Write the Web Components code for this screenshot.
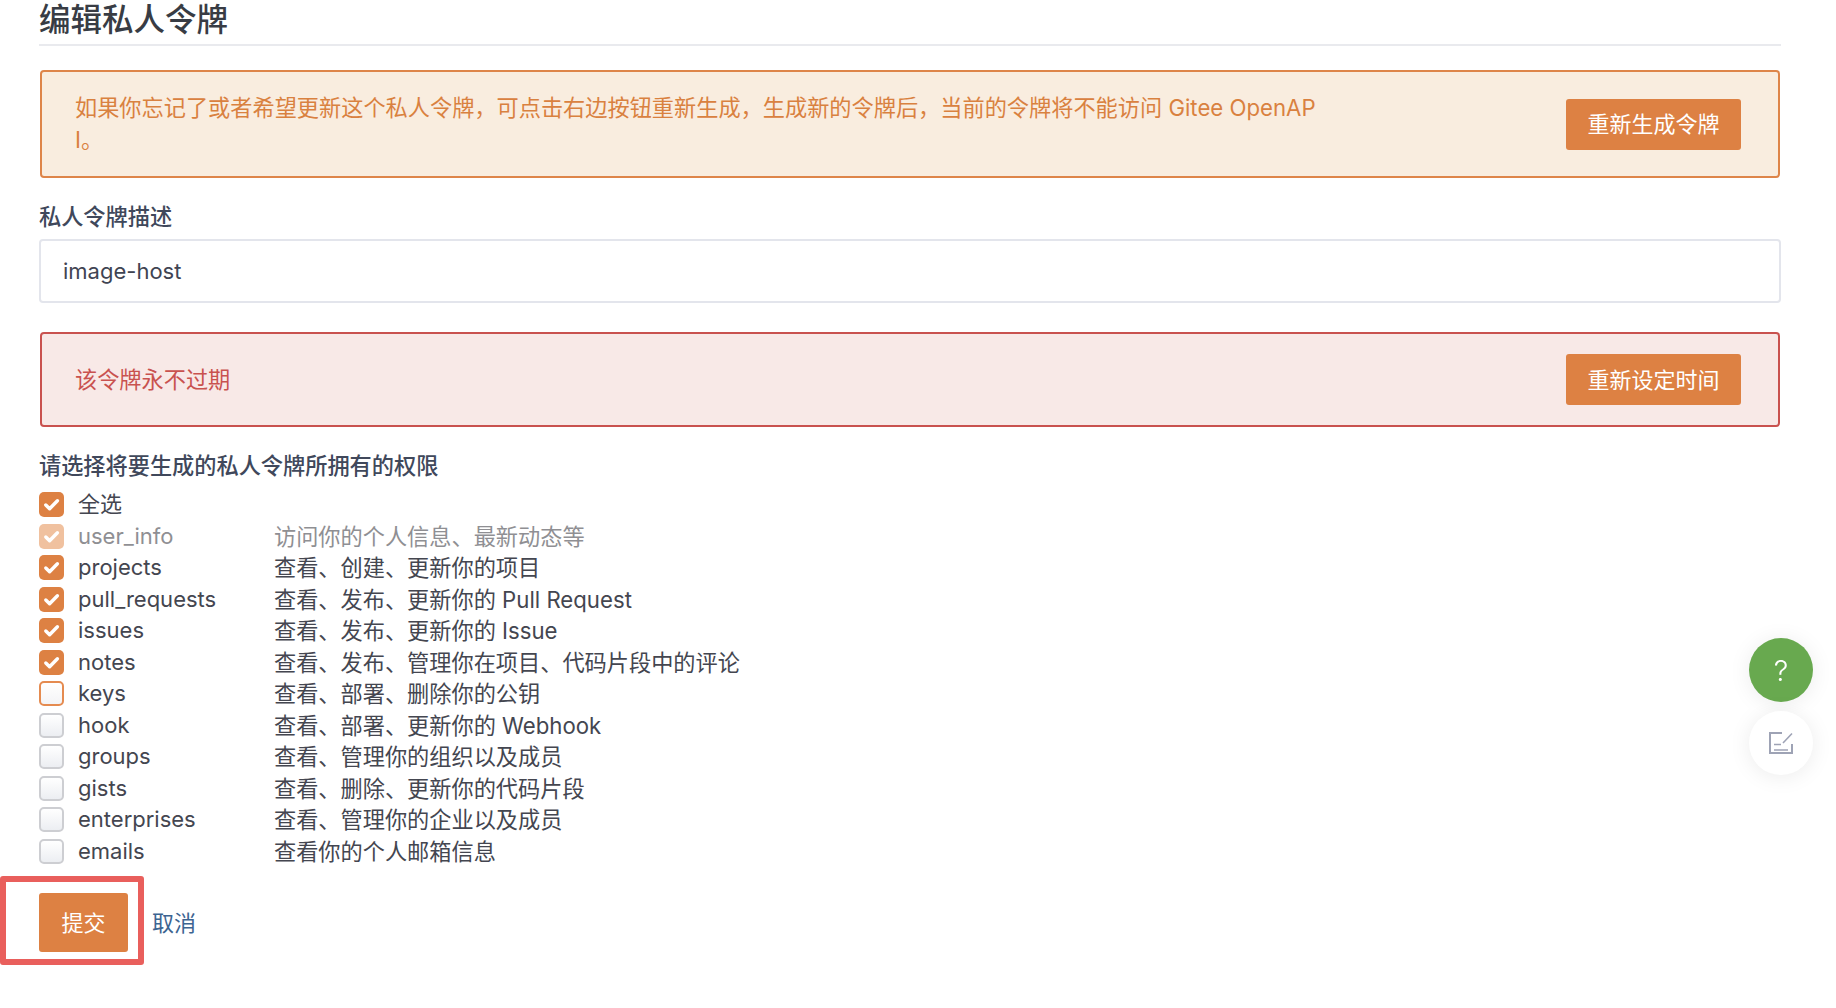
<!DOCTYPE html>
<html lang="zh-CN">
<head>
<meta charset="utf-8">
<title>编辑私人令牌</title>
<style>
  html, body { margin: 0; background: #fff; }
  body {
    font-family: Inter, "Noto Sans CJK SC", sans-serif;
    font-size: 22.2px;
    color: #40485b;
  }
</style>
</head>
<body>
<token-page>
  <page-title>编辑私人令牌</page-title>

  <token-alert tone="warning">
    如果你忘记了或者希望更新这个私人令牌，可点击右边按钮重新生成，生成新的令牌后，当前的令牌将不能访问 Gitee OpenAPI。
    <action-button slot="action">重新生成令牌</action-button>
  </token-alert>

  <field-label>私人令牌描述</field-label>
  <text-field>image-host</text-field>

  <token-alert tone="danger">
    该令牌永不过期
    <action-button slot="action">重新设定时间</action-button>
  </token-alert>

  <field-label>请选择将要生成的私人令牌所拥有的权限</field-label>
  <scope-list>
    <scope-row name="全选" checked></scope-row>
    <scope-row name="user_info" checked disabled>访问你的个人信息、最新动态等</scope-row>
    <scope-row name="projects" checked>查看、创建、更新你的项目</scope-row>
    <scope-row name="pull_requests" checked>查看、发布、更新你的 Pull Request</scope-row>
    <scope-row name="issues" checked>查看、发布、更新你的 Issue</scope-row>
    <scope-row name="notes" checked>查看、发布、管理你在项目、代码片段中的评论</scope-row>
    <scope-row name="keys" focused>查看、部署、删除你的公钥</scope-row>
    <scope-row name="hook">查看、部署、更新你的 Webhook</scope-row>
    <scope-row name="groups">查看、管理你的组织以及成员</scope-row>
    <scope-row name="gists">查看、删除、更新你的代码片段</scope-row>
    <scope-row name="enterprises">查看、管理你的企业以及成员</scope-row>
    <scope-row name="emails">查看你的个人邮箱信息</scope-row>
  </scope-list>

  <form-actions>
    <action-button slot="submit" wide>提交</action-button>
    取消
  </form-actions>
</token-page>

<float-tools></float-tools>

<script>
class TokenPage extends HTMLElement {
    constructor() {
        super();
        this.attachShadow({ mode: 'open' });
        this.shadowRoot.innerHTML = `
            <style>
                :host {
                    display: block;
                    box-sizing: border-box;
                    min-height: 100vh;
                    padding: 0 55px 0 39px;
                }
            </style>
            <slot></slot>
        `;
    }
}

class PageTitle extends HTMLElement {
    constructor() {
        super();
        this.attachShadow({ mode: 'open' });
        this.shadowRoot.innerHTML = `
            <style>
                :host {
                    display: block;
                    height: 42px;
                    padding: 2px 0 0 0;
                    border-bottom: 2px solid #e9eaee;
                    font-size: 31.5px;
                    font-weight: 500;
                    line-height: 36px;
                    color: #383c44;
                }
            </style>
            <slot></slot>
        `;
    }
}

class TokenAlert extends HTMLElement {
    constructor() {
        super();
        this.attachShadow({ mode: 'open' });
        this.shadowRoot.innerHTML = `
            <style>
                :host {
                    display: flex;
                    align-items: center;
                    justify-content: space-between;
                    box-sizing: border-box;
                    margin: 24px 1px 0;
                    padding: 20px 37px 20px 33px;
                    border: 2px solid;
                    border-radius: 4px;
                    line-height: 32px;
                }
                :host([tone="warning"]) { background: #f9eddf; border-color: #de8549; color: #d9813f; }
                :host([tone="danger"]) { min-height: 95px; margin-top: 29px; background: #f8e9e7; border-color: #c9524f; color: #c9524f; }
                .text { width: 1245px; word-break: break-all; }
            </style>
            <div class="text"><slot></slot></div>
            <slot name="action"></slot>
        `;
    }
}

class ActionButton extends HTMLElement {
    constructor() {
        super();
        this.attachShadow({ mode: 'open' });
        this.shadowRoot.innerHTML = `
            <style>
                :host {
                    display: inline-flex;
                    align-items: center;
                    justify-content: center;
                    box-sizing: border-box;
                    flex: none;
                    width: 175px;
                    height: 51px;
                    background: #dd8143;
                    border-radius: 3px;
                    color: #fff;
                    font-size: 22px;
                    line-height: 1;
                }
                :host([wide]) { width: 89px; height: 59px; }
            </style>
            <slot></slot>
        `;
    }
}

class FieldLabel extends HTMLElement {
    constructor() {
        super();
        this.attachShadow({ mode: 'open' });
        this.shadowRoot.innerHTML = `
            <style>
                :host {
                    display: block;
                    margin-top: 19px;
                    padding-top: 3px;
                    font-weight: 500;
                    line-height: 33px;
                    color: #40485b;
                }
            </style>
            <slot></slot>
        `;
    }
}

class TextField extends HTMLElement {
    constructor() {
        super();
        this.attachShadow({ mode: 'open' });
        this.shadowRoot.innerHTML = `
            <style>
                :host {
                    display: flex;
                    align-items: center;
                    box-sizing: border-box;
                    height: 64px;
                    margin-top: 6px;
                    padding: 0 22px;
                    background: #fff;
                    border: 2px solid #e3e5ec;
                    border-radius: 4px;
                    color: #3f4452;
                    font-size: 22px;
                }
            </style>
            <slot></slot>
        `;
    }
}

class ScopeList extends HTMLElement {
    constructor() {
        super();
        this.attachShadow({ mode: 'open' });
        this.shadowRoot.innerHTML = `
            <style>
                :host { display: grid; grid-auto-rows: 31.5px; margin-top: 7px; }
            </style>
            <slot></slot>
        `;
    }
}

class ScopeRow extends HTMLElement {
    constructor() {
        super();
        this.attachShadow({ mode: 'open' });
        this.shadowRoot.innerHTML = `
            <style>
                :host {
                    display: grid;
                    grid-template-columns: 25px 182px 1fr;
                    column-gap: 14px;
                    align-items: center;
                    color: #444650;
                    line-height: 31.5px;
                    white-space: nowrap;
                }
                :host([disabled]) { color: #8f8f93; }
                .box {
                    box-sizing: border-box;
                    width: 25px;
                    height: 25px;
                    border: 2px solid #cdced2;
                    border-radius: 5px;
                    background: linear-gradient(#fff, #eceef2);
                }
                :host([focused]) .box { border-color: #e58b50; background: linear-gradient(#fff, #f4f4f6); }
                :host([checked]) .box { border: 0; background: #dd8143; }
                :host([checked][disabled]) .box { background: #f0c19f; }
                svg { display: none; width: 25px; height: 25px; }
                :host([checked]) svg { display: block; }
                .name { font-size: 22px; }
            </style>
            <span class="box">
                <svg viewBox="0 0 25 25" fill="none" stroke="#fff" stroke-width="3.4" stroke-linecap="round" stroke-linejoin="round">
                    <path d="M6.8 13 10.6 16.8 18.4 8.8"/>
                </svg>
            </span>
            <span class="name"></span>
            <span class="desc"><slot></slot></span>
        `;
    }

    connectedCallback() {
        this.shadowRoot.querySelector('.name').textContent = this.getAttribute('name');
    }
}

class FormActions extends HTMLElement {
    constructor() {
        super();
        this.attachShadow({ mode: 'open' });
        this.shadowRoot.innerHTML = `
            <style>
                :host {
                    display: flex;
                    align-items: center;
                    gap: 24px;
                    position: relative;
                    margin-top: 26px;
                    color: #3c6491;
                    font-size: 22px;
                }
                span { margin-bottom: 4px; }
                .callout {
                    position: absolute;
                    left: -39px;
                    top: -17px;
                    width: 144px;
                    height: 89px;
                    box-sizing: border-box;
                    border: 6px solid #e95f5c;
                    border-radius: 3px;
                    pointer-events: none;
                }
            </style>
            <slot name="submit"></slot>
            <span><slot></slot></span>
            <div class="callout"></div>
        `;
    }
}

class FloatTools extends HTMLElement {
    constructor() {
        super();
        this.attachShadow({ mode: 'open' });
        this.shadowRoot.innerHTML = `
            <style>
                :host {
                    position: fixed;
                    left: 1749px;
                    top: 638px;
                    display: flex;
                    flex-direction: column;
                    gap: 9px;
                }
                .btn {
                    display: flex;
                    align-items: center;
                    justify-content: center;
                    width: 64px;
                    height: 64px;
                    border-radius: 50%;
                    box-shadow: 0 2px 22px rgba(0, 0, 0, .08);
                }
                .help { background: #68a94f; color: #fff; font-size: 29px; font-weight: 300; line-height: 1; }
                .edit { background: #fff; }
            </style>
            <div class="btn help">?</div>
            <div class="btn edit">
                <svg width="24" height="23" viewBox="0 0 24 23" fill="none" stroke="#9ea3b5" stroke-width="2">
                    <path d="M13 1H1V21H23V12"/>
                    <path d="M14 11 23 1.5" stroke-width="1.6"/>
                    <path d="M5 12.5H12M5 18H19" stroke-width="1.6"/>
                </svg>
            </div>
        `;
    }
}

customElements.define('token-page', TokenPage);
customElements.define('page-title', PageTitle);
customElements.define('token-alert', TokenAlert);
customElements.define('action-button', ActionButton);
customElements.define('field-label', FieldLabel);
customElements.define('text-field', TextField);
customElements.define('scope-list', ScopeList);
customElements.define('scope-row', ScopeRow);
customElements.define('form-actions', FormActions);
customElements.define('float-tools', FloatTools);
</script>
</body>
</html>
